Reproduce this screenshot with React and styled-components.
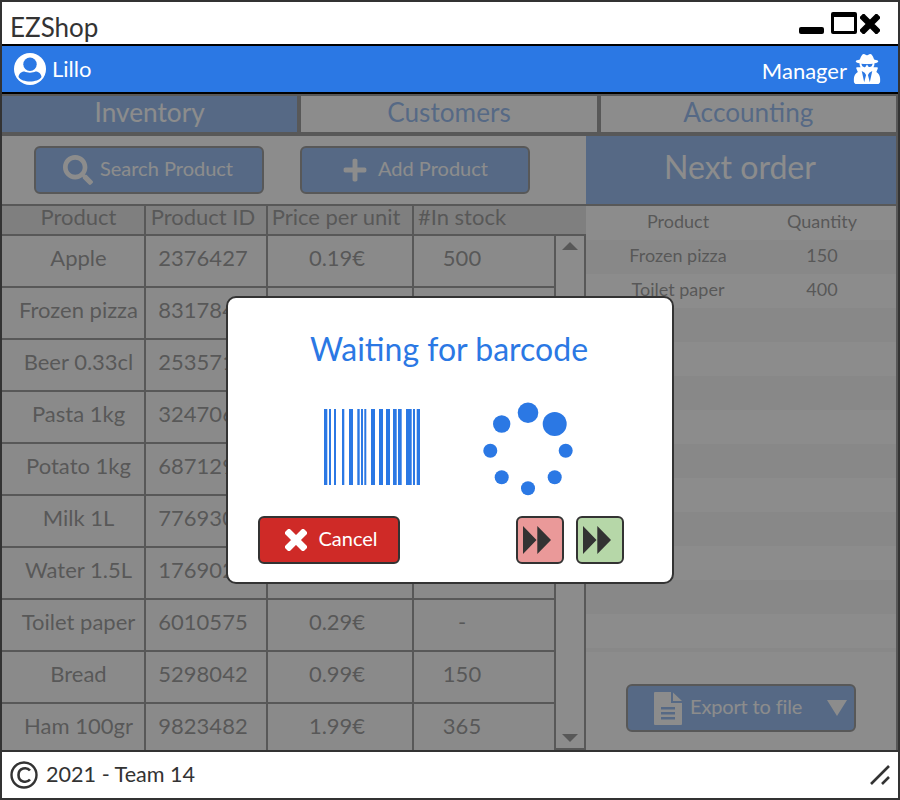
import React from "react";
import styled, { createGlobalStyle } from "styled-components";
import { FaPlus, FaSearch, FaUserSecret } from "react-icons/fa";

const GlobalStyle = createGlobalStyle`
  html, body {
    margin: 0;
    padding: 0;
    background: #fff;
    font-family: Lato, "Liberation Sans", sans-serif;
    color: #333;
  }
  * {
    box-sizing: border-box;
  }
`;

const SWindow = styled.div`
  width: 900px;
  height: 800px;
  border: 2px solid #333;
  display: flex;
  flex-direction: column;
  position: relative;
  background: #fff;
  overflow: hidden;
`;

const STitleBar = styled.div`
  height: 44px;
  flex: none;
  display: flex;
  align-items: center;
  justify-content: space-between;
  padding: 8px 18px 0 8px;
  font-size: 26px;
  border-bottom: 2px solid #000;
`;

const SWinControls = styled.div`
  display: flex;
  align-items: flex-end;
  gap: 3px;
  margin-top: -8px;
`;

const SMinimize = styled.div`
  width: 25px;
  height: 7px;
  margin-right: 4px;
  border-radius: 2px;
  background: #000;
`;

const SMaximize = styled.div`
  width: 26px;
  height: 22px;
  border: 3px solid #000;
  border-top-width: 5px;
  border-radius: 2px;
`;

const SNav = styled.div`
  height: 48px;
  flex: none;
  background: #2b78e4;
  color: #fff;
  border-bottom: 2px solid #000;
  display: flex;
  align-items: center;
  justify-content: space-between;
  padding: 0 16px 0 12px;
  font-size: 22px;
`;

const SNavSide = styled.div`
  display: flex;
  align-items: center;
  gap: ${(p) => p.$gap}px;
`;

const SNavLabel = styled.span`
  margin-top: ${(p) => p.$shift}px;
`;

const SMain = styled.div`
  flex: 1;
  min-height: 0;
  position: relative;
  display: flex;
  flex-direction: column;
  background: #fff;
`;

const SOverlay = styled.div`
  position: absolute;
  inset: 0;
  background: rgba(100, 100, 100, 0.745);
`;

const STabs = styled.div`
  height: 42px;
  flex: none;
  display: flex;
  border-top: 2px solid #333;
  border-bottom: 4px solid #333;
  border-right: 2px solid #333;
`;

const STab = styled.div`
  flex: 1;
  display: flex;
  align-items: center;
  justify-content: center;
  padding-bottom: 5px;
  font-size: 26.2px;
  color: ${(p) => (p.$active ? "#fff" : "#2b78e4")};
  background: ${(p) => (p.$active ? "#2b78e4" : "#fff")};
  border-left: ${(p) => (p.$first ? "0" : "4px solid #333")};
`;

const SBody = styled.div`
  flex: 1;
  min-height: 0;
  display: flex;
  border-right: 2px solid #333;
`;

const SLeft = styled.div`
  width: 584px;
  flex: none;
  display: flex;
  flex-direction: column;
`;

const SToolbar = styled.div`
  height: 68px;
  flex: none;
  display: flex;
  align-items: center;
  padding: 0 0 0 32px;
  gap: 36px;
`;

const SButton = styled.div`
  width: ${(p) => p.$width}px;
  height: 48px;
  flex: none;
  display: flex;
  align-items: center;
  justify-content: center;
  gap: ${(p) => p.$gap || 8}px;
  padding-right: ${(p) => p.$pr || 0}px;
  border: 2px solid #333;
  border-radius: 6px;
  background: #2b78e4;
  color: #fff;
  font-size: 20px;
  white-space: nowrap;
`;

const SButtonLabel = styled.span`
  margin-top: -4px;
`;

const SHeaderRow = styled.div`
  height: 32px;
  flex: none;
  display: grid;
  grid-template-columns: 144px 122px 146px 172px;
  grid-template-rows: 28px;
  background: #ccc;
  border-top: 2px solid #333;
  border-bottom: 2px solid #333;
`;

const SHeaderCell = styled.div`
  display: flex;
  align-items: center;
  justify-content: center;
  padding: 0 ${(p) => p.$pr || 0}px 6px ${(p) => p.$pl || 0}px;
  font-size: 22px;
  line-height: 22px;
  white-space: nowrap;
  border-right: ${(p) => (p.$last ? "0" : "2px solid #333")};
`;

const STableWrap = styled.div`
  flex: 1;
  min-height: 0;
  display: flex;
  overflow: hidden;
`;

const SRows = styled.div`
  width: 554px;
  flex: none;
`;

const SRow = styled.div`
  height: 52px;
  display: grid;
  grid-template-columns: 144px 122px 146px 142px;
  background: #f7f7f7;
  border-bottom: 2px solid #333;
`;

const SCell = styled.div`
  display: flex;
  align-items: center;
  justify-content: center;
  padding: 0 ${(p) => p.$pr || 0}px 8px ${(p) => p.$pl || 0}px;
  font-size: 22px;
  white-space: nowrap;
  border-right: 2px solid #333;
`;

const SScrollbar = styled.div`
  flex: 1;
  display: flex;
  flex-direction: column;
  align-items: center;
  justify-content: space-between;
  padding: 6px 0;
  border-right: 2px solid #333;
  border-bottom: 2px solid #333;
`;

const SArrow = styled.div`
  width: 0;
  height: 0;
  border-left: 8px solid transparent;
  border-right: 8px solid transparent;
  border-bottom: ${(p) => (p.$down ? "0" : "8px solid #333")};
  border-top: ${(p) => (p.$down ? "8px solid #333" : "0")};
`;

const SRight = styled.div`
  flex: 1;
  min-width: 0;
  display: flex;
  flex-direction: column;
`;

const SOrderTitle = styled.div`
  height: 70px;
  flex: none;
  display: flex;
  align-items: center;
  justify-content: center;
  padding: 0 2px 8px 0;
  background: #2b78e4;
  color: #fff;
  font-size: 32px;
  border-bottom: 2px solid #333;
`;

const SOrderRow = styled.div`
  height: 34px;
  flex: none;
  display: grid;
  grid-template-columns: 184px 1fr;
  align-items: center;
  font-size: 18px;
  text-align: center;
  padding: 0 22px 4px 0;
  background: ${(p) => (p.$shade ? "#f0f0f0" : "transparent")};
`;

const SOrderEnd = styled.div`
  height: 4px;
  flex: none;
  background: #f0f0f0;
`;

const SOrderFoot = styled.div`
  flex: 1;
  display: flex;
  justify-content: center;
  padding-top: 32px;
`;

const SExportButton = styled(SButton)`
  justify-content: flex-start;
  padding-left: 26px;
  letter-spacing: -0.15px;
`;

const SCaret = styled.div`
  width: 0;
  height: 0;
  margin-left: 17px;
  border-left: 10px solid transparent;
  border-right: 10px solid transparent;
  border-top: 16px solid #fff;
`;

const SFooter = styled.div`
  height: 48px;
  flex: none;
  display: flex;
  align-items: center;
  justify-content: space-between;
  padding: 0 8px;
  font-size: 21.6px;
  border-top: 2px solid #333;
`;

const SCopyright = styled.div`
  display: flex;
  align-items: center;
  gap: 8px;
`;

const SModal = styled.div`
  position: absolute;
  left: 224px;
  top: 294px;
  width: 448px;
  height: 288px;
  background: #fff;
  border: 2px solid #333;
  border-radius: 10px;
  display: flex;
  flex-direction: column;
  align-items: center;
  padding: 30px 48px 0 30px;
`;

const SModalTitle = styled.div`
  font-size: 32px;
  line-height: 42px;
  color: #2b78e4;
  margin-left: 16px;
`;

const SModalArt = styled.div`
  height: 100px;
  width: 100%;
  margin-top: 28px;
  display: flex;
  align-items: center;
  padding-left: 66px;
  gap: 62px;
`;

const SArtItem = styled.div`
  display: flex;
  margin-top: ${(p) => p.$top || 0}px;
  margin-bottom: ${(p) => p.$bottom || 0}px;
`;

const SModalButtons = styled.div`
  width: 100%;
  margin-top: 18px;
  display: flex;
  align-items: center;
  gap: 12px;
`;

const SCancel = styled(SButton)`
  background: #cf2a27;
  padding-left: 5px;
  margin-right: auto;
`;

const SSkip = styled.div`
  width: 48px;
  height: 48px;
  display: flex;
  align-items: center;
  justify-content: center;
  padding-right: 6px;
  border: 2px solid #333;
  border-radius: 6px;
  background: ${(p) => p.$color};
`;

const PRODUCTS = [
  ["Apple", "2376427", "0.19€", "500"],
  ["Frozen pizza", "8317845", "3.49€", "150"],
  ["Beer 0.33cl", "2535712", "0.89€", "240"],
  ["Pasta 1kg", "3247061", "0.79€", "320"],
  ["Potato 1kg", "6871290", "0.59€", "410"],
  ["Milk 1L", "7769304", "0.99€", "200"],
  ["Water 1.5L", "1769021", "0.39€", "600"],
  ["Toilet paper", "6010575", "0.29€", "-"],
  ["Bread", "5298042", "0.99€", "150"],
  ["Ham 100gr", "9823482", "1.99€", "365"],
];

// cell text sits a little off centre in the reference
const CELL_PADS = [{ $pl: 11 }, { $pr: 6 }, { $pr: 6 }, { $pr: 44 }];

const ORDER = [
  ["Frozen pizza", "150"],
  ["Toilet paper", "400"],
  ...Array.from({ length: 10 }, () => ["", ""]),
];

const BARS = [
  [14, 3.3], [19, 2], [24, 2], [32, 2.3], [39, 4], [47.3, 2.4], [51, 2], [54.3, 2],
  [61, 4], [69, 4], [76, 4], [83, 3.7], [88, 3.7], [96, 5.7], [103, 2], [106.7, 3.3],
];

const DOTS = [
  [528, 412.7, 10.3], [554.7, 424, 12], [565.7, 450.7, 7], [554.7, 477.3, 7],
  [528, 488.3, 7], [501.7, 477.3, 7], [490.3, 450.7, 7], [501.7, 424, 8.7],
];

function Barcode() {
  return (
    <svg width="97" height="76" viewBox="14 0 97 76">
      {BARS.map(([x, w]) => (
        <rect key={x} x={x} y="0" width={w} height="76" fill="#2b78e4" />
      ))}
    </svg>
  );
}

function Spinner() {
  return (
    <svg width="92" height="94" viewBox="483 402 92 94">
      {DOTS.map(([cx, cy, r]) => (
        <circle key={cx + cy} cx={cx} cy={cy} r={r} fill="#2b78e4" />
      ))}
    </svg>
  );
}

function ThickX({ size, color }) {
  return (
    <svg width={size} height={size} viewBox="0 0 22 22">
      <path d="M4 4 L18 18 M18 4 L4 18" stroke={color} strokeWidth="7" strokeLinecap="square" />
    </svg>
  );
}

function UserIcon() {
  return (
    <svg width="32" height="32" viewBox="0 0 32 32">
      <circle cx="16" cy="16" r="16" fill="#fff" />
      <circle cx="16" cy="11.2" r="6.7" fill="#2b78e4" />
      <path
        d="M4.5 24 C5 20 8 18.5 10.5 18.5 C13 20 19 20 21.5 18.5 C24 18.5 27 20 27.5 24 C24 30 8 30 4.5 24 Z"
        fill="#2b78e4"
      />
    </svg>
  );
}

function FileIcon() {
  return (
    <svg width="28" height="33" viewBox="0 0 28 33" fill="#fff">
      <path d="M1 0 H17 V11 H28 V32 a1 1 0 0 1 -1 1 H1 a1 1 0 0 1 -1 -1 V1 a1 1 0 0 1 1 -1 Z" />
      <path d="M19 0.5 L28 9 H19 Z" />
      <path d="M7 15 H21 V17.5 H7 Z M7 20 H21 V22.5 H7 Z M7 25 H21 V27.5 H7 Z" fill="#2b78e4" />
    </svg>
  );
}

function SkipIcon() {
  return (
    <svg width="28" height="28" viewBox="0 0 28 28" fill="#333">
      <path d="M0 0 L13.5 14 L0 28 Z M14.3 0 L28 14 L14.3 28 Z" />
    </svg>
  );
}

function CopyrightIcon() {
  return (
    <svg width="28" height="28" viewBox="0 0 28 28" fill="none" stroke="#333">
      <circle cx="14" cy="14" r="12.5" strokeWidth="2.4" />
      <path d="M20 9.5 C17 5.8 8.5 6.5 8.5 14 C8.5 21.5 17 22.2 20 18.5" strokeWidth="2.6" />
    </svg>
  );
}

export default function App() {
  return (
    <SWindow>
      <GlobalStyle />
      <STitleBar>
        <span>EZShop</span>
        <SWinControls>
          <SMinimize />
          <SMaximize />
          <ThickX size={20} color="#000" />
        </SWinControls>
      </STitleBar>
      <SNav>
        <SNavSide $gap={6}>
          <UserIcon />
          <SNavLabel $shift={-2}>Lillo</SNavLabel>
        </SNavSide>
        <SNavSide $gap={5}>
          <SNavLabel $shift={2}>Manager</SNavLabel>
          <FaUserSecret size={30} />
        </SNavSide>
      </SNav>
      <SMain>
        <STabs>
          <STab $active $first>Inventory</STab>
          <STab>Customers</STab>
          <STab>Accounting</STab>
        </STabs>
        <SBody>
          <SLeft>
            <SToolbar>
              <SButton $width={230} $gap={7} $pr={2}>
                <FaSearch size={30} />
                <SButtonLabel>Search Product</SButtonLabel>
              </SButton>
              <SButton $width={230} $gap={10}>
                <FaPlus size={26} />
                <SButtonLabel>Add Product</SButtonLabel>
              </SButton>
            </SToolbar>
            <SHeaderRow>
              <SHeaderCell $pl={11}>Product</SHeaderCell>
              <SHeaderCell $pr={6}>Product ID</SHeaderCell>
              <SHeaderCell $pr={8}>Price per unit</SHeaderCell>
              <SHeaderCell $last $pr={76}>#In stock</SHeaderCell>
            </SHeaderRow>
            <STableWrap>
              <SRows>
                {PRODUCTS.map((row) => (
                  <SRow key={row[1]}>
                    {row.map((value, i) => (
                      <SCell key={i} {...CELL_PADS[i]}>{value}</SCell>
                    ))}
                  </SRow>
                ))}
              </SRows>
              <SScrollbar>
                <SArrow />
                <SArrow $down />
              </SScrollbar>
            </STableWrap>
          </SLeft>
          <SRight>
            <SOrderTitle>Next order</SOrderTitle>
            <SOrderRow>
              <span>Product</span>
              <span>Quantity</span>
            </SOrderRow>
            {ORDER.map(([name, qty], i) => (
              <SOrderRow key={i} $shade={i % 2 === 0}>
                <span>{name}</span>
                <span>{qty}</span>
              </SOrderRow>
            ))}
            <SOrderEnd />
            <SOrderFoot>
              <SExportButton $width={230}>
                <FileIcon />
                <SButtonLabel>Export to file</SButtonLabel>
                <SCaret />
              </SExportButton>
            </SOrderFoot>
          </SRight>
        </SBody>
        <SOverlay />
      </SMain>
      <SFooter>
        <SCopyright>
          <CopyrightIcon />
          <SNavLabel $shift={-2}>2021 - Team 14</SNavLabel>
        </SCopyright>
        <svg width="22" height="22" viewBox="0 0 22 22">
          <path d="M3 20 L21 2 M14 20 L21 13" stroke="#333" strokeWidth="2.6" />
        </svg>
      </SFooter>
      <SModal>
        <SModalTitle>Waiting for barcode</SModalTitle>
        <SModalArt>
          <SArtItem $bottom={2}><Barcode /></SArtItem>
          <SArtItem $top={2}><Spinner /></SArtItem>
        </SModalArt>
        <SModalButtons>
          <SCancel $width={142} $gap={11}>
            <ThickX size={22} color="#fff" />
            <SButtonLabel>Cancel</SButtonLabel>
          </SCancel>
          <SSkip $color="#ea9999"><SkipIcon /></SSkip>
          <SSkip $color="#b6d7a8"><SkipIcon /></SSkip>
        </SModalButtons>
      </SModal>
    </SWindow>
  );
}
